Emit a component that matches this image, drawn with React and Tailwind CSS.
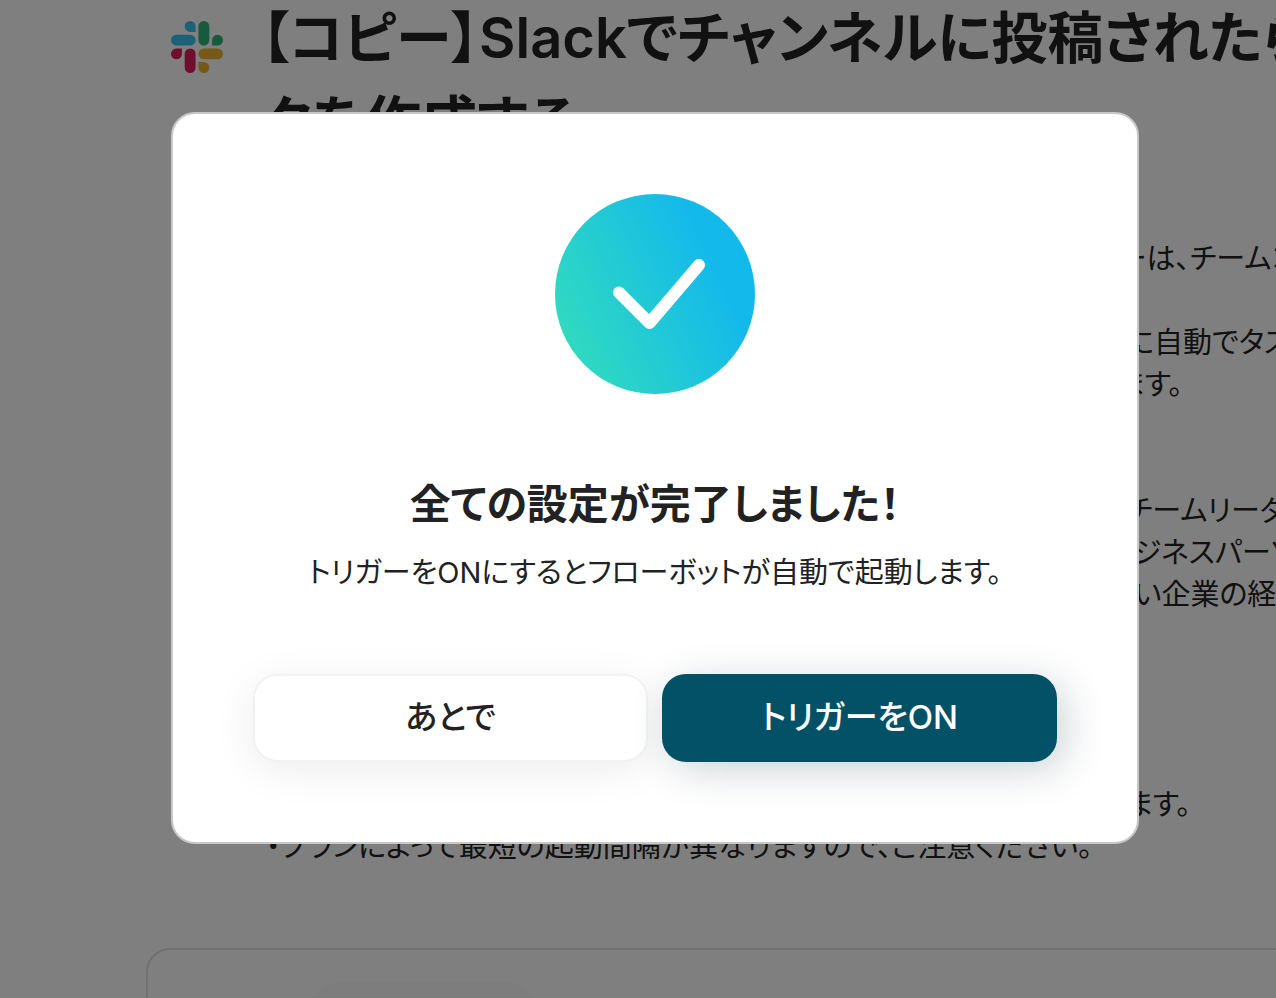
import { useState } from 'react';

function SlackLogo() {
  return (
    <svg viewBox="0 0 24 24" className="size-[52px] shrink-0" aria-hidden="true">
      <path
        fill="#e01e5a"
        d="M5.042 15.165a2.528 2.528 0 0 1-2.52 2.523A2.528 2.528 0 0 1 0 15.165a2.527 2.527 0 0 1 2.522-2.52h2.52v2.52zM6.313 15.165a2.527 2.527 0 0 1 2.521-2.52 2.527 2.527 0 0 1 2.521 2.52v6.313A2.528 2.528 0 0 1 8.834 24a2.528 2.528 0 0 1-2.521-2.522v-6.313z"
      />
      <path
        fill="#36c5f0"
        d="M8.834 5.042a2.528 2.528 0 0 1-2.521-2.52A2.528 2.528 0 0 1 8.834 0a2.528 2.528 0 0 1 2.521 2.522v2.52H8.834zM8.834 6.313a2.528 2.528 0 0 1 2.521 2.521 2.528 2.528 0 0 1-2.521 2.521H2.522A2.528 2.528 0 0 1 0 8.834a2.528 2.528 0 0 1 2.522-2.521h6.312z"
      />
      <path
        fill="#2eb67d"
        d="M18.956 8.834a2.528 2.528 0 0 1 2.522-2.521A2.528 2.528 0 0 1 24 8.834a2.528 2.528 0 0 1-2.522 2.521h-2.522V8.834zM17.688 8.834a2.528 2.528 0 0 1-2.523 2.521 2.527 2.527 0 0 1-2.52-2.521V2.522A2.527 2.527 0 0 1 15.165 0a2.528 2.528 0 0 1 2.523 2.522v6.312z"
      />
      <path
        fill="#ecb22e"
        d="M15.165 18.956a2.528 2.528 0 0 1 2.523 2.522A2.528 2.528 0 0 1 15.165 24a2.527 2.527 0 0 1-2.52-2.522v-2.522h2.52zM15.165 17.688a2.527 2.527 0 0 1-2.52-2.523 2.526 2.526 0 0 1 2.52-2.52h6.313A2.527 2.527 0 0 1 24 15.165a2.528 2.528 0 0 1-2.522 2.523h-6.313z"
      />
    </svg>
  );
}

function CheckBadge() {
  return (
    <div className="size-[200px] rounded-full bg-[linear-gradient(65deg,#2fd9c1_14%,#14b9eb_75%)]">
      <svg viewBox="0 0 200 200" fill="none" className="size-full" aria-hidden="true">
        <path
          d="M64 98.5 94.5 129 144 71"
          stroke="white"
          strokeWidth="12"
          strokeLinecap="round"
          strokeLinejoin="round"
        />
      </svg>
    </div>
  );
}

function FlowPage() {
  return (
    <main className="h-screen overflow-hidden whitespace-nowrap pl-[146px]">
      <div className="flex items-start gap-[38px] pl-[25px]">
        <div className="pt-[21px]">
          <SlackLogo />
        </div>
        <h1 className="-mt-1 text-[56px] font-semibold leading-[84px]">
          【コピー】Slackでチャンネルに投稿されたら
          <br />
          クを作成する
        </h1>
      </div>

      <div className="flex flex-col pl-[120px] pt-[74px] text-[29px] leading-[42px]">
        <div>
          <p className="pl-[852px]">ーは、チームコ</p>
          <p className="pl-[860px] pt-[42px]">に自動でタス</p>
          <p className="pl-[852px]">ます。</p>
        </div>
        <div className="pt-[84px]">
          <p className="pl-[860px]">チームリーダ</p>
          <p className="pl-[840px]">ビジネスパーソ</p>
          <p className="pl-[868px]">い企業の経</p>
        </div>
        <div className="pt-[168px]">
          <p className="pl-[860px]">ます。</p>
          <p>・プランによって最短の起動間隔が異なりますので、ご注意ください。</p>
        </div>
      </div>

      <section className="mt-20 h-60 rounded-tl-3xl border-2 border-r-0 border-[#e0e0e0] pl-[155px] pt-8">
        <div className="h-40 w-[240px] rounded-[40px] bg-[#fafafa]" />
      </section>
    </main>
  );
}

function CompleteDialog({ onClose }) {
  return (
    <div className="fixed inset-0 flex items-center justify-center bg-black/50 pb-[42px] pl-[34px]">
      <div
        role="dialog"
        aria-modal="true"
        aria-labelledby="dialog-title"
        className="flex w-full max-w-[968px] flex-col items-center rounded-3xl border-2 border-[#c8c8c8] bg-white p-20"
      >
        <CheckBadge />
        <h2 id="dialog-title" className="mt-20 text-[41px] font-semibold leading-[60px]">
          全ての設定が完了しました！
        </h2>
        <p className="mt-[18px] text-[29px] leading-[42px]">
          トリガーをONにするとフローボットが自動で起動します。
        </p>
        <div className="mt-20 grid w-full grid-cols-2 gap-[14px]">
          <button
            type="button"
            onClick={onClose}
            className="h-[88px] rounded-3xl border-2 border-[#f2f2f2] bg-white text-[33px] font-medium shadow-[0_8px_40px_rgba(0,0,0,0.08)]"
          >
            あとで
          </button>
          <button
            type="button"
            onClick={onClose}
            className="h-[88px] rounded-3xl bg-[#025167] text-[33px] font-medium text-white shadow-[8px_8px_40px_rgba(2,40,55,0.2)]"
          >
            トリガーをON
          </button>
        </div>
      </div>
    </div>
  );
}

export default function App() {
  const [open, setOpen] = useState(true);

  return (
    <div className="bg-white font-[Inter,'Noto_Sans_CJK_JP',sans-serif] text-[#222222] antialiased [font-feature-settings:'palt']">
      <FlowPage />
      {open && <CompleteDialog onClose={() => setOpen(false)} />}
    </div>
  );
}
